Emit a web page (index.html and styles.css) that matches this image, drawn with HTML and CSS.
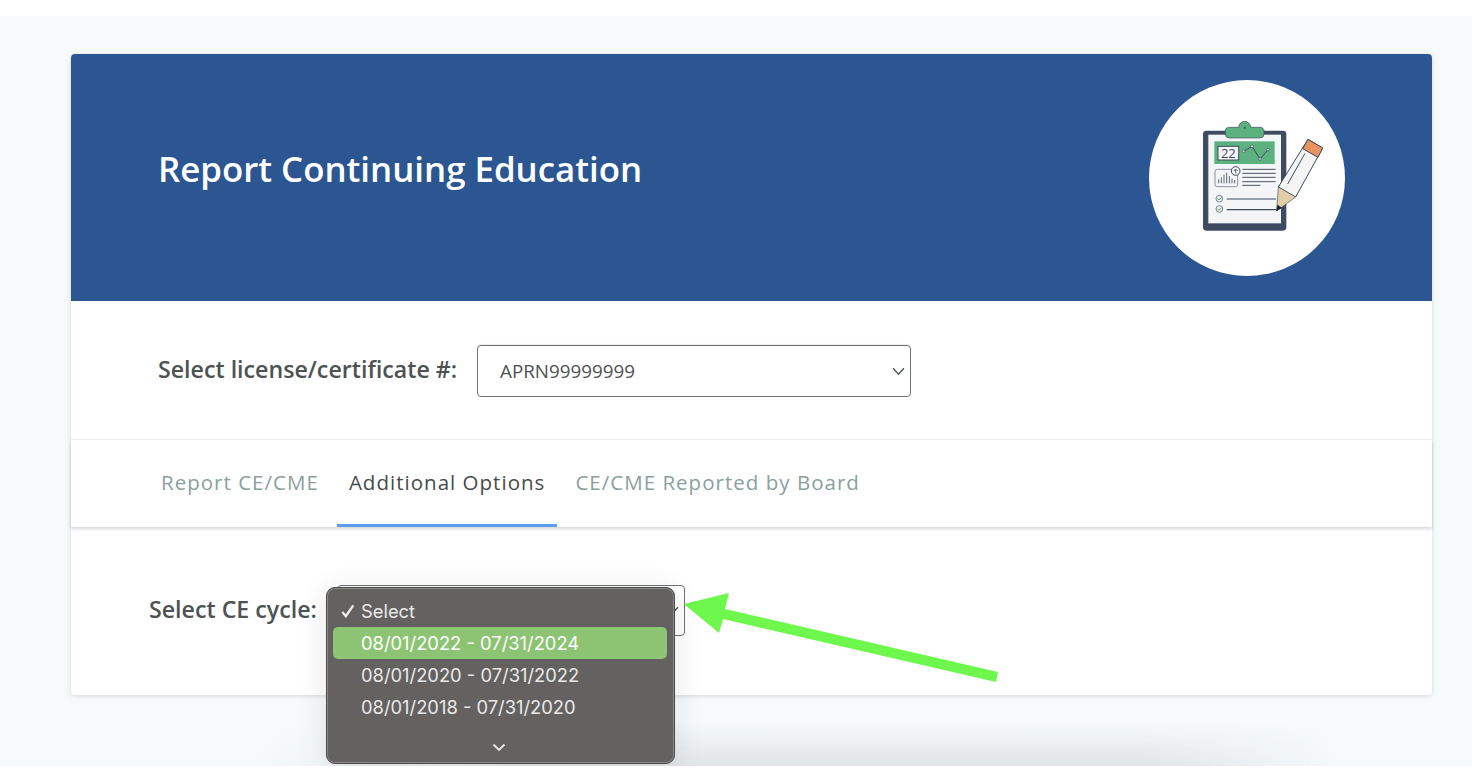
FILE: index.html
```html
<!DOCTYPE html>
<html lang="en">
<head>
<meta charset="utf-8">
<title>Report Continuing Education</title>
<link rel="stylesheet" href="styles.css">
</head>
<body>
<div class="topbar"></div>
<main class="page">
  <section class="card">
    <header class="hero">
      <h1 class="hero-title">Report Continuing Education</h1>
      <div class="hero-badge">
        <svg class="hero-icon" viewBox="27 30 588 588">
          <rect x="189" y="182" width="250" height="300" rx="10" fill="#3f4b61"/>
          <rect x="205" y="194" width="218" height="266" fill="#f4f5f6"/>
          <path d="M268 172h28a18 18 0 0 1 36 0h28a12 12 0 0 1 12 12v8a12 12 0 0 1-12 12H268a12 12 0 0 1-12-12v-8a12 12 0 0 1 12-12z" fill="#5cb27f" stroke="#3f4b61" stroke-width="2"/>
          <circle cx="314" cy="173" r="3" fill="#3f4b61"/>
          <rect x="223" y="214" width="181" height="68" fill="#5cb27f"/>
          <rect x="234" y="229" width="62" height="41" fill="#f4f5f6" stroke="#3f4b61" stroke-width="3"/>
          <text x="265" y="264" class="icon-num" text-anchor="middle">22</text>
          <path d="M311 244l25-15 24 38 24-28" fill="none" stroke="#3f4b61" stroke-width="3"/>
          <g fill="#e8ecee" stroke="#3f4b61" stroke-width="2">
            <circle cx="311" cy="244" r="4"/><circle cx="336" cy="229" r="4"/><circle cx="360" cy="267" r="4"/><circle cx="384" cy="239" r="4"/>
          </g>
          <rect x="225" y="298" width="68" height="52" rx="7" fill="#f4f5f6" stroke="#8a93a0" stroke-width="3"/>
          <path d="M236 340v-12M244 340v-18M252 340v-26M260 340v-32M268 340v-22M276 340v-14M284 340v-10" stroke="#5d6879" stroke-width="3"/>
          <circle cx="287" cy="303" r="13" fill="#f4f5f6" stroke="#3f4b61" stroke-width="3"/>
          <path d="M287 310v-13M281 303l6-6 6 6" fill="none" stroke="#3f4b61" stroke-width="2.5"/>
          <path d="M307 298h100M307 310h100M307 322h100M307 335h100M307 346h54" stroke="#4a5568" stroke-width="3"/>
          <circle cx="238" cy="386" r="10" fill="#f4f5f6" stroke="#3f4b61" stroke-width="2"/>
          <circle cx="238" cy="417" r="10" fill="#f4f5f6" stroke="#3f4b61" stroke-width="2"/>
          <path d="M232 385l5 5 8-8M232 416l5 5 8-8" fill="none" stroke="#4caf72" stroke-width="3"/>
          <path d="M260 387h148M260 419h150" stroke="#3f4b61" stroke-width="3.5"/>
          <path d="M504 208l44 26-81 147-52-30z" fill="#f5f5f6" stroke="#3f4b61" stroke-width="3"/>
          <path d="M495 250l-52 92" stroke="#3f4b61" stroke-width="3"/>
          <path d="M504 208l44 26-14 28-46-26z" fill="#e8945f" stroke="#3f4b61" stroke-width="3"/>
          <path d="M415 351l52 30-57 42z" fill="#e2cfa8" stroke="#3f4b61" stroke-width="2"/>
          <path d="M412 404l14 9-17 11z" fill="#1b2330"/>
        </svg>
      </div>
    </header>
    <div class="license-row">
      <label class="field-label">Select license/certificate #:</label>
      <div class="select-box">
        <span class="select-value">APRN99999999</span>
        <svg class="chevron" viewBox="0 0 12 8"><path d="M1 1l5 5.5L11 1" /></svg>
      </div>
    </div>
    <nav class="tabs">
      <a class="tab">Report CE/CME</a>
      <a class="tab tab-active">Additional Options</a>
      <a class="tab">CE/CME Reported by Board</a>
    </nav>
    <div class="cycle-row">
      <label class="field-label">Select CE cycle:</label>
      <div class="cycle-select">
        <svg class="chevron" viewBox="0 0 12 8"><path d="M1 1l5 5.5L11 1" /></svg>
      </div>
    </div>
  </section>
</main>
<div class="popup">
  <div class="popup-item"><svg class="popup-check" viewBox="0 0 16 16"><path d="M1.5 9l4 5L14 1.5"/></svg>Select</div>
  <div class="popup-item popup-hot">08/01/2022 - 07/31/2024</div>
  <div class="popup-item">08/01/2020 - 07/31/2022</div>
  <div class="popup-item">08/01/2018 - 07/31/2020</div>
  <svg class="popup-more" viewBox="0 0 14 9"><path d="M1.5 1.5L7 7l5.5-5.5"/></svg>
</div>
<svg class="arrow" viewBox="0 0 330 120"><path d="M4 24L49 13 45 29 318 92 316 102 43 39 39 53z"/></svg>
<div class="floor-shadow"></div>
</body>
</html>
```
FILE: styles.css
```css
* { box-sizing: border-box; }
html, body { margin: 0; height: 768px; overflow: hidden; }
body { background: #f6fafb; font-family: "Open Sans", sans-serif; position: relative; }
.topbar { height: 16px; background: #fff; }
.page { padding: 38px 40px 0 71px; }
.card { background: #fff; border-radius: 4px; box-shadow: 0 1px 5px rgba(0,0,0,.14); height: 641px; position: relative; z-index: 1; }
.hero { height: 247px; background: #2c5692; border-radius: 4px 4px 0 0; display: flex; align-items: center; justify-content: space-between; padding: 0 87px 0 87px; }
.hero-title { margin: 0 0 18px; color: #fff; font-size: 34.85px; font-weight: 600; }
.hero-badge { width: 196px; height: 196px; border-radius: 50%; background: #fff; }
.hero-icon { display: block; width: 196px; height: 196px; }
.icon-num { font-family: "Open Sans", sans-serif; font-size: 39px; fill: #3f4b61; }
.license-row { height: 139px; display: flex; align-items: flex-start; padding: 44px 0 0 87px; border-bottom: 1px solid #eef0f1; }
.field-label { font-size: 23.2px; font-weight: 600; color: #4d5352; margin-right: 20px; line-height: 52px; margin-top: -2px; }
.select-box { width: 434px; height: 52px; border: 1px solid #6f7272; border-radius: 4px; display: flex; align-items: center; justify-content: space-between; padding: 0 5px 0 22px; box-shadow: 0 -1px 1px rgba(0,0,0,.08); }
.select-value { font-size: 18.8px; color: #4d5352; }
.chevron { width: 13px; height: 9px; fill: none; stroke: #4d5352; stroke-width: 1.3; }
.tabs { height: 87px; display: flex; padding-left: 90px; gap: 18px; box-shadow: 0 2px 3px rgba(0,0,0,.16); position: relative; }
.tab { height: 87px; display: flex; align-items: center; font-size: 20.5px; font-weight: 500; letter-spacing: 1.02px; color: #8aa0a0; border-bottom: 3px solid transparent; }
.tab-active { color: #454b4a; border-bottom-color: #5a9ded; padding-left: 12px; padding-right: 12px; }
.cycle-row { height: 168px; display: flex; align-items: flex-start; padding: 58px 0 0 78px; }
.cycle-select { width: 348px; height: 51px; border: 1px solid #6f7272; border-radius: 4px; display: flex; align-items: center; justify-content: flex-end; padding-right: 5px; }
.popup { position: absolute; left: 326px; top: 587px; width: 349px; height: 177px; background: #636261; border: 1px solid #4a4a49; border-radius: 9px; box-shadow: inset 0 0 0 1px #8a8988, 0 4px 30px rgba(0,0,0,.1); padding: 7px 7px 0 6px; z-index: 3; color: #e9e9e8; font-family: Inter, sans-serif; font-size: 18.35px; }
.popup-item { height: 32px; border-radius: 5px; display: flex; align-items: center; padding-left: 28px; position: relative; }
.popup-check { position: absolute; left: 8px; top: 9px; width: 14px; height: 14px; fill: none; stroke: #f2f2f1; stroke-width: 2.6; }
.popup-hot { background: #8cc474; color: #fff; }
.popup-more { display: block; width: 14px; height: 9px; margin: 20px auto 0; position: relative; left: -1px; fill: none; stroke: #e9e9e8; stroke-width: 1.8; }
.arrow { position: absolute; left: 680px; top: 580px; width: 330px; height: 120px; z-index: 2; fill: #6ef74c; }
.floor-shadow { position: absolute; left: 250px; right: 132px; top: 722px; height: 44px; background: linear-gradient(to bottom, rgba(225,228,229,0), rgba(225,228,229,1)); -webkit-mask-image: linear-gradient(to right, transparent, #000 30%, #000 82%, transparent); mask-image: linear-gradient(to right, transparent, #000 30%, #000 82%, transparent); }
body::after { content: ""; position: absolute; left: 0; right: 0; top: 766px; height: 2px; background: #fff; z-index: 5; }
```
